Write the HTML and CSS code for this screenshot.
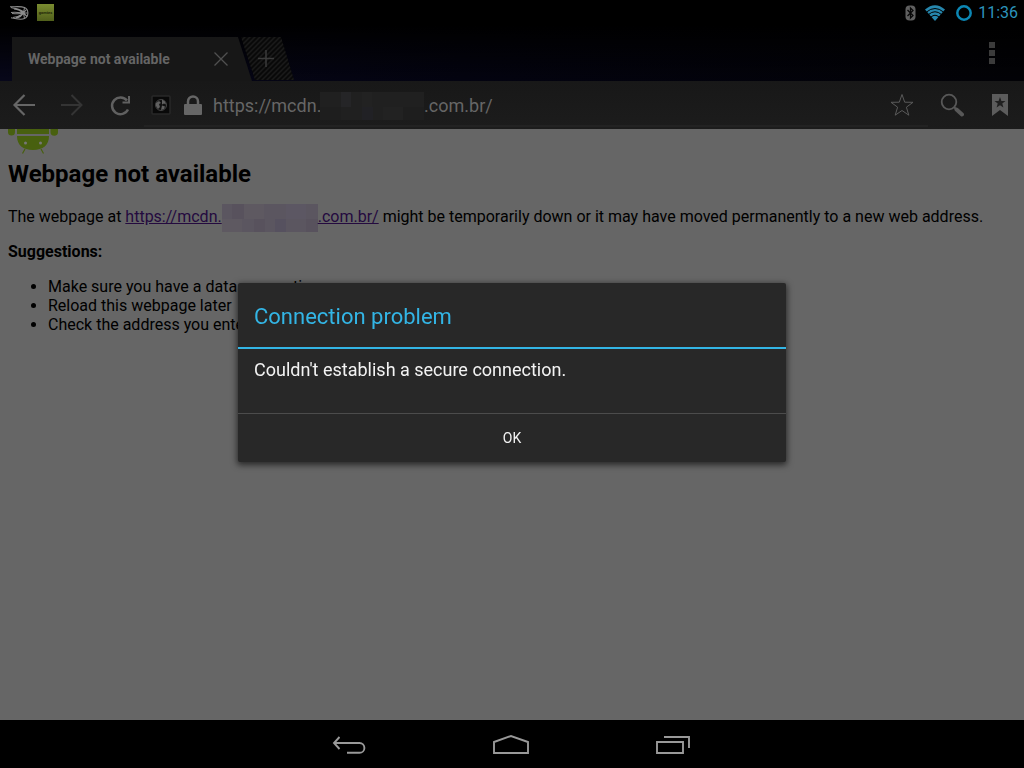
FILE: index.html
```html
<!DOCTYPE html>
<html lang="en">
<head>
<meta charset="utf-8">
<meta name="viewport" content="width=device-width, initial-scale=1">
<title>Webpage not available</title>
<link rel="stylesheet" href="styles.css">
</head>
<body>
<div class="screen">
  <header class="status-bar">
    <div class="notifications">
      <svg class="comet" width="20" height="14" viewBox="0 0 20 14" aria-hidden="true">
        <g fill="none" stroke="#8c8c8c" stroke-width="1.100">
          <path d="M0 .8C6 .8 11 0 14.500 1.500c4.500 2 4.500 9 0 11C11.500 14 6 13 1 11.800"/>
          <path d="M1 1.500c6 1.500 9 1 13 5M4 3c5 .5 7 2 9.500 4.500M1 6.500c5-.7 8 0 12 .5h4.500M2 7.500c6 .5 8 .5 11-.2M3 11.500c5-.5 7-1.500 10.500-4M6 12c4-.5 6-2.500 7.500-5l3-3.500M13.500 7l1-5.500M13.500 7l1 5.500M13.500 7l3.500 3.500"/>
        </g>
      </svg>
      <span class="app-badge">gomtes</span>
    </div>
    <div class="system">
      <svg width="11" height="16" viewBox="0 0 11 16" aria-hidden="true">
        <rect x=".5" y=".5" width="10" height="15" rx="4" fill="#606060"/>
        <path d="M2.500 5l5.500 5.500L5.500 13V3L8 5.500 2.500 11" fill="none" stroke="#080808" stroke-width="1.300"/>
      </svg>
      <svg class="wifi" width="20" height="16" viewBox="0 0 20 16" aria-hidden="true">
        <path d="M0 4.500Q10-4 20 4.500L10 16z" fill="#2687ad"/>
        <path d="M1.500 7Q10 0 18.500 7M3.500 9.500Q10 4 16.500 9.500M6 12Q10 8.500 14 12" fill="none" stroke="#000" stroke-width="1"/>
      </svg>
      <svg class="ring" width="16" height="16" viewBox="0 0 16 16" aria-hidden="true"><circle cx="8" cy="8" r="6.700" fill="none" stroke="#0c87b4" stroke-width="2.500"/></svg>
      <time>11:36</time>
    </div>
  </header>

  <div class="tab-strip">
    <div class="tab">
      <span class="tab-title">Webpage not available</span>
      <button class="icon-button" type="button" aria-label="Close tab"><svg width="16" height="16" viewBox="0 0 16 16"><path d="M1.500 1.500l13 13m0-13l-13 13" stroke="#505050" stroke-width="1.300"/></svg></button>
    </div>
    <button class="new-tab" type="button" aria-label="New tab">
      <svg width="54" height="44" viewBox="0 0 54 44">
        <defs><pattern id="hatch" width="5" height="5" patternUnits="userSpaceOnUse"><path d="M-1 6L6-1M-1 1L1-1M4 6l2-2" stroke="#1a1a1a" stroke-width="1.500"/></pattern></defs>
        <path d="M1 0h40l13 43H15z" fill="#090909"/>
        <path d="M1 0h40l13 43H15z" fill="url(#hatch)"/>
        <path d="M26 13v17M18 21.500h16" stroke="#3b3b3b" stroke-width="1.500"/>
      </svg>
    </button>
    <button class="icon-button overflow" type="button" aria-label="Menu"><svg width="6" height="22" viewBox="0 0 6 22"><path d="M0 0h6v6H0zM0 8h6v6H0zM0 16h6v6H0z" fill="#3b3b3b"/></svg></button>
  </div>

  <nav class="toolbar" aria-label="Browser">
    <button class="icon-button" type="button" aria-label="Back"><svg width="24" height="24" viewBox="0 0 24 24"><path d="M23 12H2M12.500 2l-10 10 10 10" fill="none" stroke="#666" stroke-width="2.200"/></svg></button>
    <button class="icon-button" type="button" aria-label="Forward"><svg width="24" height="24" viewBox="0 0 24 24"><path d="M1 12h21M11.500 2l10 10-10 10" fill="none" stroke="#343434" stroke-width="2"/></svg></button>
    <button class="icon-button" type="button" aria-label="Reload"><svg width="24" height="24" viewBox="0 0 24 24"><path d="M20 16.500A8.400 8.400 0 1 1 19 7.500" fill="none" stroke="#606060" stroke-width="2.500"/><path d="M22 3v7.500h-7.500V8.500H20V3z" fill="#606060"/></svg></button>
    <div class="address">
      <svg class="favicon" width="20" height="20" viewBox="0 0 20 20" aria-hidden="true"><rect x="1" y="1" width="18" height="18" rx="1" fill="#090909" stroke="#292929" stroke-width="1.500"/><circle cx="10" cy="10" r="5.500" fill="#111" stroke="#444"/><path d="M5 8l3-2 2 2-2 1 1 3-2 2-2-3zM11 4.500l3 2 1 3-2-1-2 1zM11 10.500l3 1-1 2.500-3 1z" fill="#606060"/></svg>
      <svg class="lock" width="18" height="20" viewBox="0 0 18 20" aria-hidden="true"><rect y="9" width="18" height="11" rx="1" fill="#666"/><path d="M4 10V6.500a5 5 0 0 1 10 0V10" fill="none" stroke="#666" stroke-width="2.500"/></svg>
      <div class="url">
        <input class="url-input" type="text" aria-label="Address" spellcheck="false" value="https://mcdn.&nbsp;&nbsp;&nbsp;&nbsp;&nbsp;&nbsp;&nbsp;&nbsp;&nbsp;&nbsp;&nbsp;&nbsp;&nbsp;&nbsp;&nbsp;&nbsp;&nbsp;&nbsp;&nbsp;&nbsp;&nbsp;&nbsp;&nbsp;.com.br/">
        <svg class="url-mask" width="104" height="28" viewBox="0 0 104 28" aria-hidden="true"><path fill="#202020" d="M0 0h104v28H0z"/><path fill="#252527" d="M21 0h10v15H21z"/><path fill="#222" d="M42 0h10v15H42zM63 15h20v13H63z"/><path fill="#212125" d="M42 15h11v13H42z"/><path fill="#1e1e1e" d="M0 15h21v13H0zM83 15h21v13H83z"/></svg>
      </div>
      <button class="icon-button" type="button" aria-label="Bookmark this page"><svg width="24" height="24" viewBox="0 0 24 24"><path d="M12 1.500l2.700 7.700 8.300.1-6.600 4.900 2.400 8L12 17.500l-6.800 4.700 2.400-8L1 9.300l8.300-.1z" fill="none" stroke="#5a5a5a" stroke-width="1"/></svg></button>
    </div>
    <button class="icon-button" type="button" aria-label="Search"><svg width="24" height="24" viewBox="0 0 24 24"><circle cx="9" cy="9" r="7.300" fill="none" stroke="#585858" stroke-width="1.800"/><path d="M14 14l3 3" stroke="#585858" stroke-width="2"/><path d="M16.500 16.500l5.500 5" stroke="#585858" stroke-width="4" stroke-linecap="round"/></svg></button>
    <button class="icon-button" type="button" aria-label="Bookmarks"><svg width="16" height="22" viewBox="0 0 16 22"><path d="M0 0h16v22l-8-6-8 6z" fill="#5c5c5c"/><path d="M8 3l1.400 3.900 4.100.1-3.200 2.500 1.100 4L8 11.200l-3.400 2.300 1.100-4L2.500 7l4.100-.1z" fill="#202020"/></svg></button>
  </nav>

  <main class="page">
    <svg class="android" width="50" height="25" viewBox="0 0 50 25" aria-hidden="true"><path d="M0 0h7v3a3.500 3.500 0 0 1-7 0zM42.500 0H50v3a3.500 3.500 0 0 1-7.500 0zM9 0h32v5H9zM9 7h32c0 9-6 14-16 14S9 16 9 7z" fill="#48600f"/><path d="M17 20l-2.500 4.500M33 20l2.500 4.500" stroke="#48600f" stroke-width="1.200"/><circle cx="17.500" cy="14" r="1.500" fill="#777"/><circle cx="32.500" cy="14" r="1.500" fill="#777"/></svg>
    <h1>Webpage not available</h1>
    <p>The webpage at <a href="#">https://mcdn.<svg class="link-mask" width="96" height="28" viewBox="0 0 96 28" aria-hidden="true"><path fill="#5b5660" d="M0 0h96v28H0z"/><path fill="#58525d" d="M10 0h12v15H10zM32 15h11v13H32zM84 15h12v13H84z"/><path fill="#5e5961" d="M22 0h20v15H22zM0 15h20v13H0z"/><path fill="#56515f" d="M53 15h11v13H53z"/><path fill="#5c5763" d="M64 0h20v15H64z"/></svg>.com.br/</a> might be temporarily down or it may have moved permanently to a new web address.</p>
    <p><strong>Suggestions:</strong></p>
    <ul>
      <li>Make sure you have a data connection</li>
      <li>Reload this webpage later</li>
      <li>Check the address you entered</li>
    </ul>
  </main>

  <nav class="nav-bar" aria-label="System">
    <button class="icon-button" type="button" aria-label="Back"><svg width="34" height="20" viewBox="0 0 34 20"><path d="M2 8h25.500a4.800 4.800 0 0 1 0 9.800H15M7.500 2L2 8l5.500 6" fill="none" stroke="#999" stroke-width="1.900"/></svg></button>
    <button class="icon-button" type="button" aria-label="Home"><svg width="36" height="20" viewBox="0 0 36 20"><path d="M1 18V7l17-6 17 6v11z" fill="none" stroke="#999" stroke-width="1.900"/></svg></button>
    <button class="icon-button" type="button" aria-label="Recent apps"><svg width="34" height="20" viewBox="0 0 34 20"><path d="M1 7h26v11H1zM8 2h25v11" fill="none" stroke="#999" stroke-width="1.900"/></svg></button>
  </nav>
</div>

<div class="dialog-layer">
  <section class="dialog" role="alertdialog" aria-labelledby="dialog-title" aria-describedby="dialog-message">
    <h2 id="dialog-title">Connection problem</h2>
    <p id="dialog-message">Couldn't establish a secure connection.</p>
    <button type="button">OK</button>
  </section>
</div>
</body>
</html>
```

FILE: styles.css
```css
* { box-sizing: border-box; }

body {
  margin: 0;
  background: #000;
  font-family: Roboto, "Liberation Sans", sans-serif;
}

svg { display: block; }

.screen {
  display: flex;
  flex-direction: column;
  min-height: 100vh;
}

.icon-button {
  display: flex;
  align-items: center;
  justify-content: center;
  padding: 0;
  border: 0;
  background: none;
  cursor: pointer;
}

.status-bar {
  display: flex;
  justify-content: space-between;
  height: 25px;
  padding: 0 6px 0 10px;
  background: #000;
}

.notifications, .system {
  display: flex;
  align-items: center;
}

.notifications { gap: 7px; }

.app-badge {
  width: 17px;
  height: 17px;
  background: linear-gradient(#7b8c31, #505f1b);
  color: #202708;
  font-size: 4px;
  font-weight: 700;
  line-height: 17px;
  text-align: center;
}

.system { color: #2c94bd; }
.wifi { margin-left: 9px; }
.ring { margin: 0 6px 0 11px; }
.system time { font-size: 16px; }

.tab-strip {
  display: flex;
  align-items: flex-end;
  height: 56px;
  padding: 0 24px 0 12px;
  background:
    linear-gradient(#000, transparent),
    linear-gradient(90deg, #07071a, #030310 45%, #020206);
}

.tab {
  display: flex;
  align-items: center;
  justify-content: space-between;
  width: 240px;
  height: 44px;
  padding: 0 23px 0 16px;
  background: #171717;
  clip-path: polygon(0 0, 226px 0, 100% 100%, 0 100%);
}

.tab-title {
  color: #656565;
  font-size: 14px;
  font-weight: 700;
}

.new-tab {
  margin-left: -12px;
  padding: 0;
  border: 0;
  background: none;
}

.overflow {
  height: 56px;
  margin: 0 5px 0 auto;
}

.toolbar {
  display: flex;
  align-items: center;
  gap: 24px;
  height: 48px;
  padding: 0 16px 0 12px;
  background: linear-gradient(#181818, #1c1c1c);
}

.toolbar > .icon-button:nth-last-child(2) { margin-right: 4px; }

.address {
  display: flex;
  flex: 1;
  align-items: center;
  height: 44px;
  min-width: 0;
  padding: 2px 14px 0 7px;
  margin-right: -12px;
  margin-left: -12px;
  border-bottom: 2px solid #222;
}

.lock { margin: 0 11px 0 13px; }

.url {
  position: relative;
  flex: 1;
  min-width: 0;
}

.url-input {
  display: block;
  width: 100%;
  padding: 0;
  border: 0;
  outline: 0;
  background: none;
  color: #666;
  font-family: inherit;
  font-size: 18px;
}

.url-mask {
  position: absolute;
  top: -3px;
  left: 107px;
}

.page {
  flex: 1;
  padding: 0 8px;
  background: #666;
  color: #000;
  font-size: 16px;
  line-height: 19px;
}

.page h1 {
  margin: 6px 0 19px;
  font-size: 24px;
  line-height: 28px;
}

.page p { margin: 16px 0; }
.page a { color: #240a3f; }

.page ul {
  margin: 16px 0;
  padding-left: 40px;
}

.link-mask {
  display: inline-block;
  margin: -6px 0;
  vertical-align: middle;
}

.nav-bar {
  display: flex;
  justify-content: center;
  gap: 127px;
  height: 48px;
  padding: 2px 2px 0 0;
  background: #000;
}

.dialog-layer {
  position: fixed;
  inset: 0;
  display: flex;
  align-items: center;
  justify-content: center;
  padding: 25px 16px 48px;
}

.dialog {
  width: 548px;
  border-radius: 2px;
  background: #282828;
  box-shadow: 0 2px 6px 1px rgba(0, 0, 0, .6);
}

.dialog h2 {
  margin: 0;
  padding: 4px 16px 0;
  border-bottom: 2px solid #33b5e5;
  color: #33b5e5;
  font-size: 22px;
  font-weight: 400;
  line-height: 60px;
}

.dialog p {
  margin: 0;
  padding: 9px 16px 31px;
  color: #f3f3f3;
  font-size: 18px;
  line-height: 24px;
}

.dialog button {
  display: block;
  width: 100%;
  height: 49px;
  border: 0;
  border-top: 1px solid #4c4c4c;
  background: none;
  color: #f3f3f3;
  font-family: inherit;
  font-size: 14px;
}
```
